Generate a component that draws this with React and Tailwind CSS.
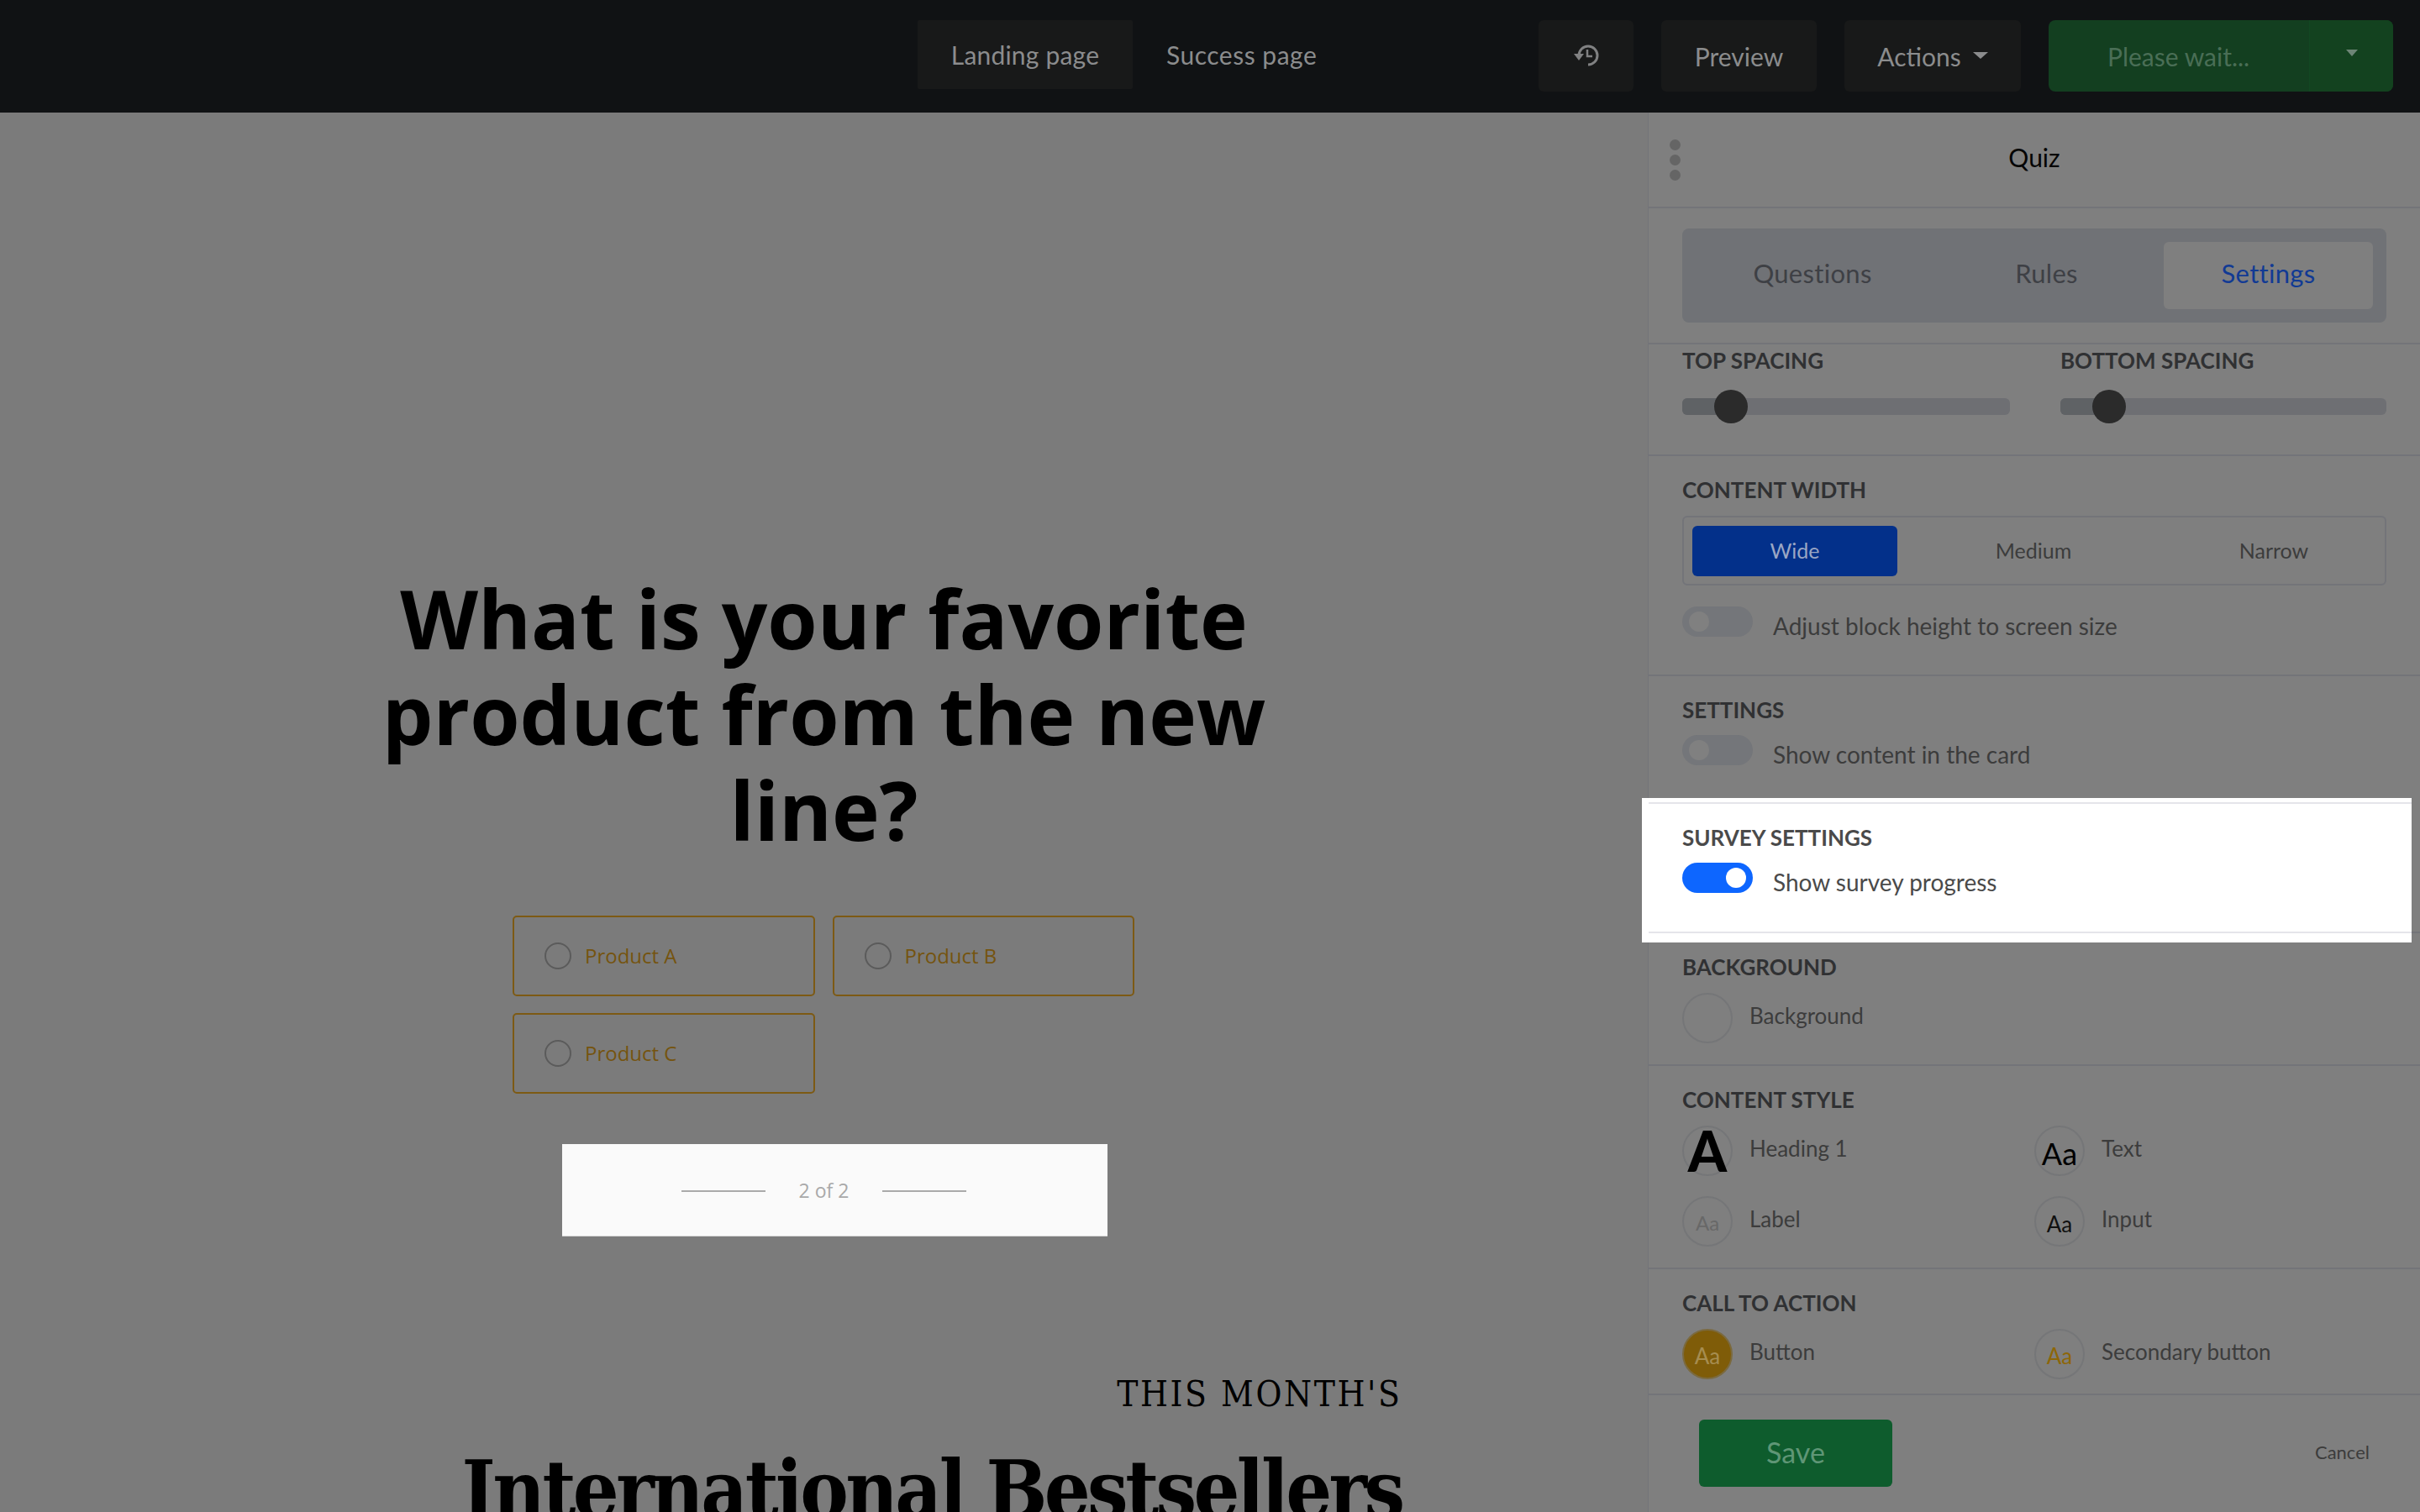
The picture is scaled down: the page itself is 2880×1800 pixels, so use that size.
const FONT_PANEL = "font-['Lato','Open_Sans',sans-serif]";

function HistoryIcon() {
  return (
    <svg width="32" height="28" viewBox="0 0 32 28" fill="none">
      <path d="M7 13A11 11 0 1 1 18 24" stroke="#808182" strokeWidth="3" />
      <path d="M1 11H13L7 19Z" fill="#808182" />
      <path d="M17 6V14H23" stroke="#808182" strokeWidth="2.5" />
    </svg>
  );
}

function BarButton({ children, className = '' }) {
  return (
    <div className={`h-[85px] flex items-center justify-center rounded-[6px] bg-[#181919] text-[#8b8c8d] text-[30px] ${className}`}>
      {children}
    </div>
  );
}

function TopBar() {
  return (
    <div className="h-[134px] shrink-0 bg-[#101214] flex items-start pt-[24px] pr-[32px]">
      <div className="ml-[1092px] w-[256px] h-[82px] flex items-center justify-center bg-[#181919] text-[#8b8c8d] text-[30px] tracking-[0.2px] rounded-[2px]">Landing page</div>
      <div className="ml-[40px] h-[82px] flex items-center text-[#8b8c8d] text-[30px] tracking-[0.5px]">Success page</div>
      <div className="ml-auto flex gap-[33px]">
        <BarButton className="w-[113px]"><HistoryIcon /></BarButton>
        <BarButton className="w-[185px] pt-[2px]">Preview</BarButton>
        <BarButton className="w-[210px] pt-[2px] gap-[14px]">
          Actions
          <span className="w-0 h-0 border-x-[9px] border-x-transparent border-t-[8px] border-t-[#8b8c8d] -mt-[4px]" />
        </BarButton>
        <div className="w-[410px] h-[85px] flex rounded-[8px] bg-[#133f20] text-[#4a6e56] text-[30px]">
          <div className="w-[310px] flex items-center pl-[70px] pt-[2px]">Please wait...</div>
          <div className="flex-1 flex items-center justify-center border-l border-l-[#124723] bg-[#13421f] rounded-r-[8px]">
            <span className="w-0 h-0 border-x-[7px] border-x-transparent border-t-[8px] border-t-[#6d8576] -mt-[8px]" />
          </div>
        </div>
      </div>
    </div>
  );
}

function Choice({ label }) {
  return (
    <div className="h-[96px] border-2 border-[#7d5a14] rounded-[5px] flex items-center pl-[36px] gap-[16px]">
      <span className="w-[32px] h-[32px] rounded-full border-2 border-[#5b5b5b]" />
      <span className="text-[#75540f] text-[24px] font-medium">{label}</span>
    </div>
  );
}

function Canvas() {
  return (
    <div className="flex-1 bg-[#7b7b7b] flex flex-col items-center pt-[545px] font-['Open_Sans',sans-serif] overflow-hidden">
      <h1 className="w-[1100px] text-center text-black text-[96px] leading-[114px] font-bold">
        What is your favorite product from the new line?
      </h1>
      <div className="mt-[69px] w-[740px] ml-[-1px] grid grid-cols-2 gap-x-[21px] gap-y-[20px]">
        <Choice label="Product A" />
        <Choice label="Product B" />
        <Choice label="Product C" />
      </div>
      <div className="relative mt-[60px] h-[110px] w-[340px] flex items-center justify-between shrink-0">
        <div className="absolute left-[-142px] w-[649px] top-0 bottom-0 bg-[#fafafa] border-b border-b-[#d8d8d8]" />
        <span className="relative w-[100px] h-[2px] bg-[#aaaaaa] mt-[2px]" />
        <span className="relative text-[#a9a9a9] text-[23px]">2 of 2</span>
        <span className="relative w-[100px] h-[2px] bg-[#aaaaaa] mt-[2px]" />
      </div>
      <div className="mt-[168px] w-[1114px] ml-[252px] shrink-0 text-right font-['DejaVu_Serif_Condensed','DejaVu_Serif',serif] text-black">
        <div className="-mr-[5px] text-[42px] leading-[40px] tracking-[2.6px] whitespace-nowrap">THIS MONTH'S</div>
        <div className="mt-[44px] text-[96px] leading-[100px] font-bold whitespace-nowrap tracking-[-3.6px]">International Bestsellers</div>
      </div>
    </div>
  );
}

function Label({ children }) {
  return <div className="text-[26px] leading-[32px] font-bold text-[#303133] whitespace-nowrap">{children}</div>;
}

function Toggle({ on, label }) {
  return (
    <div className="flex items-start mt-[14px]">
      <div className={`w-[84px] h-[36px] rounded-full flex items-center px-[8px] ${on ? 'bg-[#0d66ff] justify-end' : 'bg-[#74767a]'}`}>
        <span className={`w-[24px] h-[24px] rounded-full ${on ? 'bg-white' : 'bg-[#808080]'}`} />
      </div>
      <span className={`ml-[24px] mt-[6px] text-[28px] leading-[34px] ${on ? 'text-[#4a4a4a]' : 'text-[#3c3c3c]'}`}>{label}</span>
    </div>
  );
}

function Slider({ width }) {
  return (
    <div className="mt-[19px] h-[40px] flex items-center relative" style={{ width }}>
      <div className="w-full h-[20px] rounded-[6px] bg-[#6e6f73] overflow-hidden">
        <div className="w-[50px] h-full bg-[#5f6265]" />
      </div>
      <span className="absolute left-[38px] top-0 w-[40px] h-[40px] rounded-full bg-[#2b2b2b]" />
    </div>
  );
}

function Swatch({ label, circle = 'border-[#757678]', aa, aaClass = '' }) {
  return (
    <div className="flex items-start">
      <div className={`w-[60px] h-[60px] rounded-full border-2 flex items-center justify-center ${circle}`}>
        {aa && <span className={`leading-none ${aaClass}`}>{aa}</span>}
      </div>
      <span className="ml-[20px] mt-[10px] text-[26px] leading-[34px] text-[#3c3c3c]">{label}</span>
    </div>
  );
}

function Section({ children, className = '' }) {
  return <div className={`relative px-[40px] border-b-2 border-b-[#737479] ${className}`}>{children}</div>;
}

function Panel() {
  return (
    <div className={`relative z-10 w-[919px] shrink-0 bg-[#7f7f7f] border-l border-l-[#737479] flex flex-col ${FONT_PANEL}`}>
      <Section className="h-[114px] flex items-center justify-center">
        <div className="absolute left-[25px] top-[32px] flex flex-col gap-[5px]">
          <span className="w-[13px] h-[13px] rounded-full bg-[#656565]" />
          <span className="w-[13px] h-[13px] rounded-full bg-[#656565]" />
          <span className="w-[13px] h-[13px] rounded-full bg-[#656565]" />
        </div>
        <span className="text-[30px] text-[#050505] -mt-[6px]">Quiz</span>
      </Section>

      <Section className="h-[162px] pt-[24px]">
        <div className="h-[112px] rounded-[8px] bg-[#707276] flex items-center pl-[16px] text-[31px] tracking-[0.3px]">
          <div className="w-[278px] text-center text-[#3e4045] -mt-[6px]">Questions</div>
          <div className="w-[279px] text-center text-[#3e4045] -mt-[6px]">Rules</div>
          <div className="w-[249px] h-[80px] rounded-[6px] bg-[#7f7f7f] flex items-center justify-center text-[#113a94] pb-[6px]">Settings</div>
        </div>
      </Section>

      <Section className="h-[133px] pt-[3px]">
        <div className="flex gap-[60px]">
          <div><Label>TOP SPACING</Label><Slider width={390} /></div>
          <div><Label>BOTTOM SPACING</Label><Slider width={388} /></div>
        </div>
      </Section>

      <Section className="h-[262px] pt-[24px]">
        <Label>CONTENT WIDTH</Label>
        <div className="mt-[15px] h-[83px] border-2 border-[#737479] rounded-[6px] flex items-center px-[10px] text-[25px] text-[#3c3c3c]">
          <div className="w-[244px] h-[60px] rounded-[6px] bg-[#03308a] text-[#9aa6c4] flex items-center justify-center">Wide</div>
          <div className="w-[324px] text-center">Medium</div>
          <div className="flex-1 text-center pl-[2px]">Narrow</div>
        </div>
        <div className="pt-[11px]"><Toggle label="Adjust block height to screen size" /></div>
      </Section>

      <div className="relative h-[152px] px-[40px] pt-[24px]">
        <Label>SETTINGS</Label>
        <Toggle label="Show content in the card" />
      </div>

      <Section className="h-[154px] pt-[24px]">
        <div className="absolute -left-[8px] -top-[7px] w-[916px] h-[172px] bg-white">
          <div className="mt-[5px] ml-[8px] h-[2px] bg-[#e5e5ea]" />
          <div className="mt-[152px] ml-[8px] h-[2px] bg-[#e5e5ea]" />
        </div>
        <div className="relative">
          <div className="text-[26px] leading-[32px] font-bold text-[#4a4a4a]">SURVEY SETTINGS</div>
          <Toggle on label="Show survey progress" />
        </div>
      </Section>

      <Section className="h-[158px] pt-[24px]">
        <Label>BACKGROUND</Label>
        <div className="mt-[15px]"><Swatch label="Background" /></div>
      </Section>

      <Section className="h-[242px] pt-[24px]">
        <Label>CONTENT STYLE</Label>
        <div className="mt-[15px] grid grid-cols-2 gap-y-[24px]">
          <Swatch label="Heading 1" aa="A" aaClass="text-[66px] font-black text-black" />
          <Swatch label="Text" aa="Aa" aaClass="text-[36px] text-black mt-[6px]" />
          <Swatch label="Label" aa="Aa" aaClass="text-[24px] text-[#686868] mt-[4px]" />
          <Swatch label="Input" aa="Aa" aaClass="text-[26px] text-[#111111] mt-[6px]" />
        </div>
      </Section>

      <Section className="h-[150px] pt-[24px]">
        <Label>CALL TO ACTION</Label>
        <div className="mt-[15px] grid grid-cols-2">
          <Swatch label="Button" circle="border-[#7b6a3f] bg-[#7f5c08]" aa="Aa" aaClass="text-[26px] text-[#a68d50] mt-[4px]" />
          <Swatch label="Secondary button" aa="Aa" aaClass="text-[26px] text-[#8d6608] mt-[4px]" />
        </div>
      </Section>

      <div className="flex-1 flex items-start justify-between pt-[29px] pl-[60px] pr-[60px]">
        <div className="w-[230px] h-[80px] rounded-[6px] bg-[#0e5c2d] text-[#5f9676] text-[34px] flex items-center justify-center pb-[4px]">Save</div>
        <span className="mt-[24px] text-[22px] leading-[30px] text-[#3c3c3c]">Cancel</span>
      </div>
    </div>
  );
}

export default function App() {
  return (
    <div className={`w-[2880px] h-[1800px] flex flex-col overflow-hidden ${FONT_PANEL}`}>
      <TopBar />
      <div className="flex-1 flex min-h-0">
        <Canvas />
        <Panel />
      </div>
    </div>
  );
}
